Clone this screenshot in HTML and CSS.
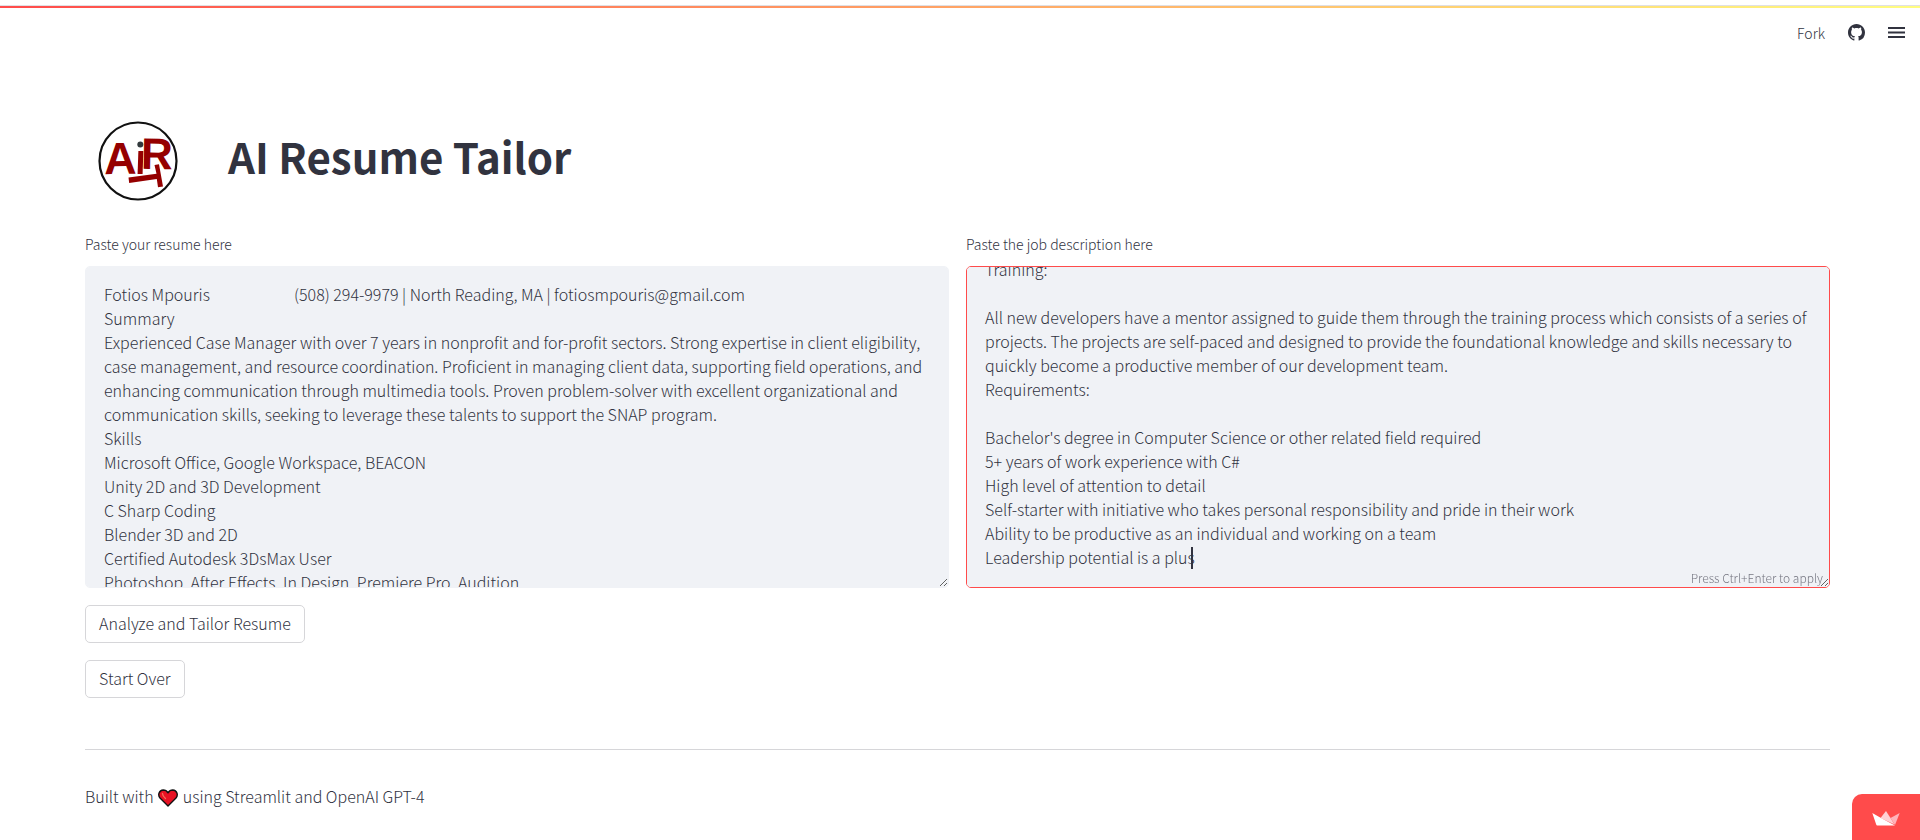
FILE: index.html
```html
<!DOCTYPE html>
<html lang="en">
<head>
<meta charset="utf-8">
<title>AI Resume Tailor</title>
<link rel="stylesheet" href="styles.css">
</head>
<body>
<header class="topbar">
  <div class="decoration"></div>
  <nav class="toolbar">
    <a class="tool" href="#fork">Fork</a>
    <a class="tool" href="#source" aria-label="View source on GitHub">
      <svg class="tool-icon" viewBox="0 0 16 16" aria-hidden="true"><path fill="currentColor" d="M8 0C3.58 0 0 3.58 0 8c0 3.54 2.29 6.53 5.47 7.59.4.07.55-.17.55-.38 0-.19-.01-.82-.01-1.49-2.01.37-2.53-.49-2.69-.94-.09-.23-.48-.94-.82-1.13-.28-.15-.68-.52-.01-.53.63-.01 1.08.58 1.23.82.72 1.21 1.87.87 2.33.66.07-.52.28-.87.51-1.07-1.78-.2-3.64-.89-3.64-3.95 0-.87.31-1.59.82-2.15-.08-.2-.36-1.02.08-2.12 0 0 .67-.21 2.2.82.64-.18 1.32-.27 2-.27s1.36.09 2 .27c1.53-1.04 2.2-.82 2.2-.82.44 1.1.16 1.92.08 2.12.51.56.82 1.27.82 2.15 0 3.07-1.87 3.75-3.65 3.95.29.25.54.73.54 1.48 0 1.07-.01 1.93-.01 2.2 0 .21.15.46.55.38A8.01 8.01 0 0 0 16 8c0-4.42-3.58-8-8-8z"/></svg>
    </a>
    <button class="tool" type="button" aria-label="Main menu">
      <svg class="tool-icon" viewBox="0 0 17 17" aria-hidden="true"><path fill="currentColor" d="M0 3h17v2H0zM0 7.500h17v2H0zM0 12h17v2H0z"/></svg>
    </button>
  </nav>
</header>

<main class="page">
  <div class="hero">
    <svg class="logo" viewBox="0 0 80 80" role="img" aria-label="AI Resume Tailor logo">
      <circle cx="40" cy="40" r="38.500" fill="#fff" stroke="#111" stroke-width="2.200"/>
      <g class="logo-letters">
        <text x="6" y="53" font-size="45" transform="rotate(-1 22 38)">A</text>
        <rect x="40" y="30" width="5" height="23" transform="rotate(2 42 41)"/>
        <circle cx="42.300" cy="23.500" r="3" fill="#333a3d"/>
        <text x="43" y="48" font-size="44" transform="rotate(1 56 33)">R</text>
        <path d="M30.500 56.500 58.500 52.800 56.500 44 61 43.200 65 65.500 60 66.200 58.800 58 31.200 62Z"/>
      </g>
    </svg>
    <h1 class="title">AI Resume Tailor</h1>
  </div>

  <div class="columns">
    <div class="field">
      <label class="label" for="resume">Paste your resume here</label>
      <div class="box">
<textarea class="area" id="resume" spellcheck="false">Fotios Mpouris	(508) 294-9979 | North Reading, MA | fotiosmpouris@gmail.com
Summary
Experienced Case Manager with over 7 years in nonprofit and for-profit sectors. Strong expertise in client eligibility, case management, and resource coordination. Proficient in managing client data, supporting field operations, and enhancing communication through multimedia tools. Proven problem-solver with excellent organizational and communication skills, seeking to leverage these talents to support the SNAP program.
Skills
Microsoft Office, Google Workspace, BEACON
Unity 2D and 3D Development
C Sharp Coding
Blender 3D and 2D
Certified Autodesk 3DsMax User
Photoshop, After Effects, In Design, Premiere Pro, Audition,</textarea>
      </div>
    </div>
    <div class="field">
      <label class="label" for="job">Paste the job description here</label>
      <div class="box">
<textarea class="area area-active" id="job" spellcheck="false">Training:

All new developers have a mentor assigned to guide them through the training process which consists of a series of projects. The projects are self-paced and designed to provide the foundational knowledge and skills necessary to quickly become a productive member of our development team.
Requirements:

Bachelor's degree in Computer Science or other related field required
5+ years of work experience with C#
High level of attention to detail
Self-starter with initiative who takes personal responsibility and pride in their work
Ability to be productive as an individual and working on a team
Leadership potential is a plus</textarea>
        <span class="caret"></span>
        <span class="hint">Press Ctrl+Enter to apply</span>
      </div>
    </div>
  </div>

  <div class="actions">
    <button class="btn" type="button">Analyze and Tailor Resume</button>
    <button class="btn" type="button">Start Over</button>
  </div>

  <hr class="rule">

  <p class="credit">Built with
    <svg class="heart" viewBox="0 0 20 18" role="img" aria-label="love"><path d="M10 17 2 9C-.5 6 1 1.200 5.200 1 7.500 1 9 2.200 10 3.800 11 2.200 12.500 1 14.800 1 19 1.200 20.500 6 18 9Z" fill="#e81224" stroke="#111" stroke-width="1.400" stroke-linejoin="round"/><path d="M4.500 4.500c0 2 1 3.200 3 5" fill="none" stroke="#f4705a" stroke-width="1.300" stroke-linecap="round"/></svg>
    using Streamlit and OpenAI GPT-4</p>
</main>

<a class="badge" href="#streamlit" aria-label="Hosted with Streamlit">
  <svg class="crown" viewBox="0 0 28 16" aria-hidden="true"><path fill="#ffd0d5" d="M14 .500 8.500 7.500 22.500 14Z"/><path fill="#ffd0d5" d="M14 .500 18.500 8 22.500 14Z"/><path fill="#ffb3ba" d="M27.700 2.500 18.500 7.500 23 14.500Z"/><path fill="#fff" d="M.300 2.500 9 7.500 23 15H5.200Q4.500 15 4.200 14Z"/></svg>
</a>
<script src="script.js"></script>
</body>
</html>
```

FILE: styles.css
```css
* {
  box-sizing: border-box;
}

body {
  margin: 0;
  min-height: 100vh;
  background: #fff;
  color: #31333f;
  font-family: "Noto Sans CJK SC", "Noto Sans", sans-serif;
  font-size: 16px;
  font-weight: 300;
  line-height: 24px;
}

.topbar {
  padding-top: 5px;
}

.decoration {
  height: 3px;
  border-top: 1px solid #e0e0e4;
  background: linear-gradient(90deg, #ff4b4b, #fffd80);
}

.toolbar {
  display: flex;
  justify-content: flex-end;
  align-items: center;
  gap: 23px;
  height: 49px;
  padding-right: 15px;
}

.tool {
  display: flex;
  padding: 0;
  border: 0;
  background: none;
  color: inherit;
  font-size: 14px;
  text-decoration: none;
}

.tool-icon {
  width: 17px;
  height: 17px;
}

.page {
  padding: 64px 90px 24px 85px;
}

.hero {
  display: flex;
  align-items: flex-start;
  gap: 50px;
  margin-bottom: 31px;
  padding-left: 13px;
}

.logo {
  width: 80px;
  height: 80px;
}

.logo-letters {
  fill: #950000;
  stroke: none;
  font-family: "Liberation Sans", sans-serif;
  font-weight: 700;
}

.title {
  margin: 0;
  font-size: 42px;
  line-height: 70px;
  font-weight: 700;
}

.columns {
  display: grid;
  grid-template-columns: 1fr 1fr;
  gap: 17px;
}

.label {
  display: block;
  margin-bottom: 10px;
  font-size: 14px;
}

.box {
  position: relative;
}

.area {
  display: block;
  width: 100%;
  height: 322px;
  padding: 15px 18px 18px;
  border: 1px solid #f0f2f6;
  border-radius: 5px;
  outline: 0;
  background: #f0f2f6;
  color: inherit;
  font: inherit;
  tab-size: 190px;
  resize: vertical;
}

.area-active {
  border-color: #ff4b4b;
  caret-color: transparent;
}

.area::-webkit-scrollbar {
  width: 6px;
  height: 6px;
  background: transparent;
}

.caret {
  position: absolute;
  left: 225px;
  bottom: 19px;
  width: 2px;
  height: 22px;
  background: #31333f;
}

.hint {
  position: absolute;
  right: 7px;
  bottom: 1px;
  color: #777883;
  font-size: 12px;
  line-height: 18px;
}

.actions {
  display: flex;
  flex-direction: column;
  align-items: flex-start;
  gap: 17px;
  margin-top: 17px;
}

.btn {
  padding: 5px 13px 7px;
  border: 1px solid #d6d6d9;
  border-radius: 5px;
  background: #fff;
  color: inherit;
  font: inherit;
}

.rule {
  margin: 51px 0 34px;
  border: 0;
  border-top: 1px solid #d6d6d9;
}

.credit {
  margin: 0;
}

.heart {
  width: 20px;
  height: 18px;
  margin: 0 1px 2px;
  vertical-align: middle;
}

.badge {
  position: fixed;
  right: 0;
  bottom: 0;
  display: flex;
  padding: 16px 20px 13px;
  border-top-left-radius: 10px;
  background: #ff4b4b;
}

.crown {
  width: 28px;
  height: 17px;
}
```

FILE: script.js
```js
// Keep the end of the job description in view, where the typing stopped.
const job = document.getElementById("job");
job.scrollTop = job.scrollHeight;
```
